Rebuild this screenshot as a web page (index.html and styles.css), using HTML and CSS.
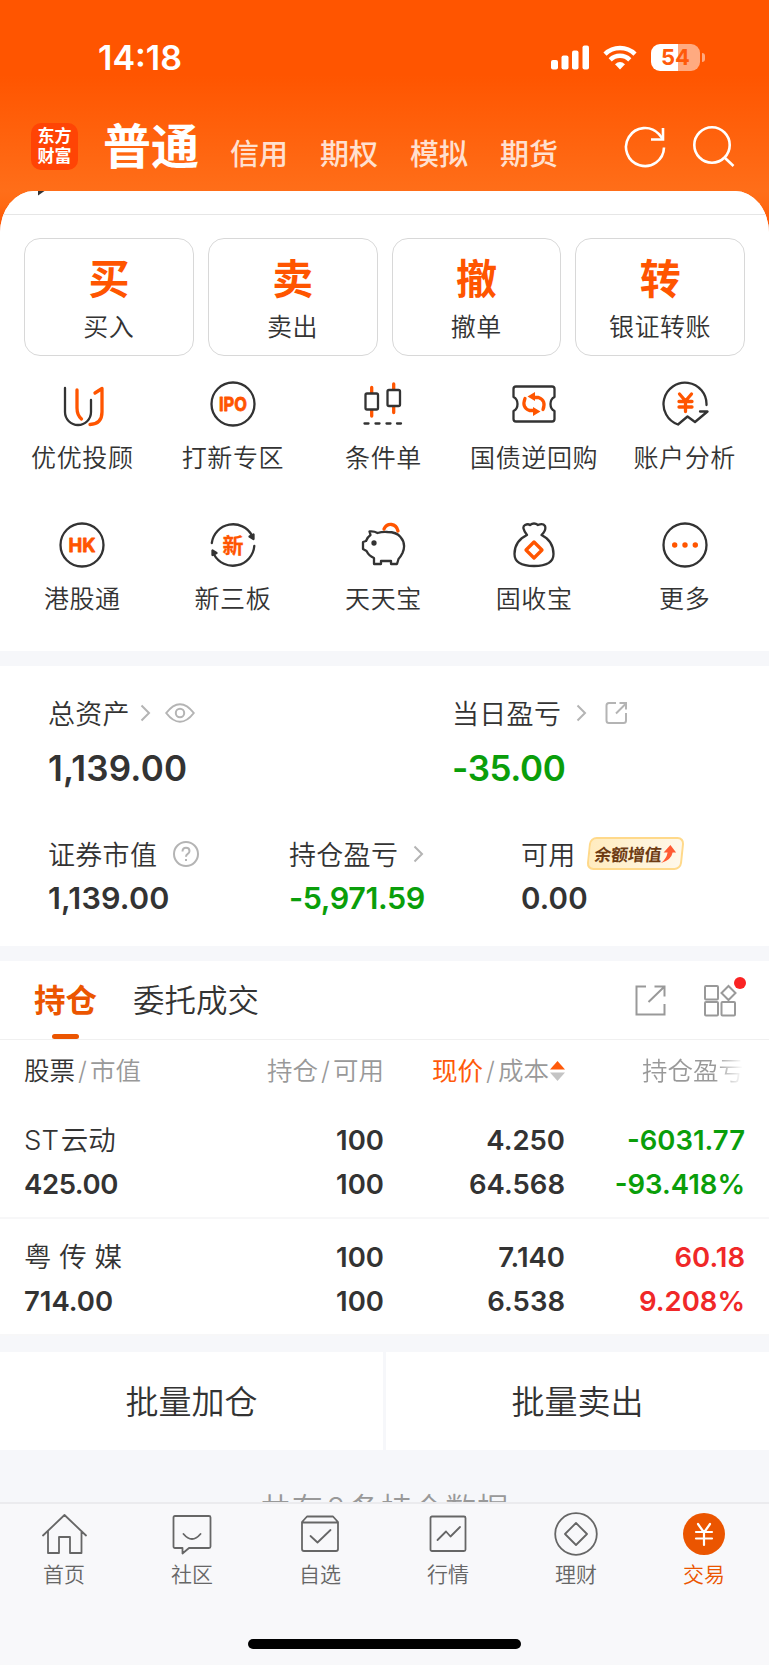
FILE: index.html
```html
<!DOCTYPE html>
<html lang="zh-CN">
<head>
  <meta charset="UTF-8">
  <meta name="viewport" content="width=device-width, initial-scale=1.0">
  <title>交易</title>
  <link rel="stylesheet" href="styles.css">
</head>
<body>
  <header class="header">
    <div class="status-bar">
      <span class="time">14:18</span>
      <div class="status-icons">
        <svg class="signal" width="39" height="25" viewBox="0 0 39 25" fill="#fff">
          <rect x="0" y="15" width="7" height="9.500" rx="2"/>
          <rect x="10.500" y="10.500" width="7" height="14" rx="2"/>
          <rect x="21" y="5.500" width="6.500" height="19" rx="2"/>
          <rect x="31.500" y="0.500" width="6.500" height="24" rx="2"/>
        </svg>
        <svg class="wifi" width="34" height="25" viewBox="0 0 34 25" fill="none" stroke="#fff" stroke-width="4.500">
          <path d="M2 9.200a21.500 21.500 0 0 1 30 0"/>
          <path d="M7.200 14.800a14 14 0 0 1 19.600 0"/>
          <path d="M17 24.500l-5-5.200q5-4.400 10 0z" fill="#fff" stroke="none"/>
        </svg>
        <div class="battery"><span>54</span></div>
      </div>
    </div>
    <nav class="top-nav">
      <div class="logo"><span>东方</span><span>财富</span></div>
      <h1>普通</h1>
      <a>信用</a>
      <a>期权</a>
      <a>模拟</a>
      <a>期货</a>
      <svg class="refresh" width="42" height="42" viewBox="0 0 42 42" fill="none" stroke="#fff" stroke-width="2.600">
        <path d="M40 21.500a19 19 0 1 1-5-13.300l4 5"/>
        <path d="M39 2v11.500H27"/>
      </svg>
      <svg class="search" width="42" height="42" viewBox="0 0 42 42" fill="none" stroke="#fff" stroke-width="2.600">
        <circle cx="19" cy="19" r="17.700"/>
        <path d="M31 31l9.500 9"/>
      </svg>
    </nav>
  </header>

  <main class="panel">
    <div class="notice">
      <svg width="7" height="5" viewBox="0 0 7 5"><path d="M0 0h6.500L0 4.500z" fill="#333"/></svg>
    </div>

    <section class="actions">
      <div class="action"><strong>买</strong><span>买入</span></div>
      <div class="action"><strong>卖</strong><span>卖出</span></div>
      <div class="action"><strong>撤</strong><span>撤单</span></div>
      <div class="action"><strong>转</strong><span>银证转账</span></div>
    </section>

    <section class="tools">
      <div class="tool">
        <svg viewBox="0 0 48 48">
          <path d="M7 8v24a12.500 12.500 0 0 0 26 0V20"/>
          <path class="hot" d="M19 10v18q0 7 4.500 11M37 13l7-4.500V32q0 12-12 12.500"/>
        </svg>
        <span>优优投顾</span>
      </div>
      <div class="tool">
        <svg viewBox="0 0 48 48">
          <circle cx="24" cy="24" r="21.500"/>
          <text x="24" y="31" textLength="28" lengthAdjust="spacingAndGlyphs" class="ico-text">IPO</text>
        </svg>
        <span>打新专区</span>
      </div>
      <div class="tool">
        <svg viewBox="0 0 48 48">
          <path class="hot" d="M12.700 7.500v28.500M34.700 4v28.500"/>
          <rect x="6.500" y="13.500" width="12.500" height="16" rx="1.500" fill="#fff"/>
          <rect x="28.500" y="10" width="12.500" height="16" rx="1.500" fill="#fff"/>
          <path d="M5.500 43.500h4M16.500 43.500h4M27.500 43.500h4M38 43.500h4"/>
        </svg>
        <span>条件单</span>
      </div>
      <div class="tool">
        <svg viewBox="0 0 48 48">
          <path d="M6 6.500h36q2.500 0 2.500 2.500v8q-4 2-4 7t4 7v8q0 2.500-2.500 2.500H6q-2.500 0-2.500-2.500v-8q4-2 4-7t-4-7V9q0-2.500 2.500-2.500z"/>
          <path class="hot" d="M15 18.500q-3.500 9 4.500 12h5M33 29.500q3.500-9-4.500-12h-5"/>
          <path class="hot-fill" d="M17.500 16.500l7.500-4.500v9zM30.500 31.500L23 27v9z"/>
        </svg>
        <span>国债逆回购</span>
      </div>
      <div class="tool">
        <svg viewBox="0 0 48 48">
          <path d="M45.500 25A21.500 21.500 0 1 0 17 44.500l9.500-8 7.500 5.500 12.500-10.500H39"/>
          <path class="hot" d="M18.500 14l6 7 6-7M24.500 21v10.500M18 21.500h13M18 27h13"/>
        </svg>
        <span>账户分析</span>
      </div>
      <div class="tool">
        <svg viewBox="0 0 48 48">
          <circle cx="24" cy="24" r="21.500"/>
          <text x="24" y="31" textLength="27" lengthAdjust="spacingAndGlyphs" class="ico-text">HK</text>
        </svg>
        <span>港股通</span>
      </div>
      <div class="tool">
        <svg viewBox="0 0 48 48">
          <path d="M2.800 22A21.500 21.500 0 0 1 43 14.500M45.300 25A21.500 21.500 0 0 1 5 33.500"/>
          <path class="dark-fill" d="M44.500 13.500v4.500l-4-2.500zM3.500 29.500v4.500l4-2z"/>
          <text x="24" y="31.500" class="ico-text ico-cjk">新</text>
        </svg>
        <span>新三板</span>
      </div>
      <div class="tool">
        <svg viewBox="0 0 48 48">
          <path d="M10.500 10.500q4.500-.5 8 1.500 5-1.500 10-1 9 0 13 5 6 7 2 16-2 4-4 6l-1.500 5h-6v-3h-10v3h-7v-6q-5-2-7.500-7L4 28v-7l3-1q1.500-4 4.500-6z"/>
          <circle cx="15" cy="22" r="1.500" class="dark-fill"/>
          <path class="hot" d="M25 8q2.500-5 7.500-4.500T39 10"/>
        </svg>
        <span>天天宝</span>
      </div>
      <div class="tool">
        <svg viewBox="0 0 48 48">
          <path d="M17 14q-6-8-2-10 3-1.500 5 0 4-3 8 0 5-2 7 1 1.500 4-3.500 9 12 6 12 19 0 12-19.500 12T4.500 33Q4.500 20 17 14z"/>
          <path class="hot" d="M24 21l8 8-8 8-8-8z"/>
        </svg>
        <span>固收宝</span>
      </div>
      <div class="tool">
        <svg viewBox="0 0 48 48">
          <circle cx="24" cy="24" r="21.500"/>
          <path class="hot-fill" d="M11 24a2.700 2.700 0 1 0 5.400 0 2.700 2.700 0 1 0-5.400 0M21.300 24a2.700 2.700 0 1 0 5.400 0 2.700 2.700 0 1 0-5.400 0M31.600 24a2.700 2.700 0 1 0 5.400 0 2.700 2.700 0 1 0-5.400 0"/>
        </svg>
        <span>更多</span>
      </div>
    </section>

    <section class="assets">
      <div class="assets-row total">
        <div class="asset">
          <div class="label">总资产
            <svg class="arrow" width="11" height="18" viewBox="0 0 11 18"><path d="M1.500 1.500L9 9l-7.500 7.500"/></svg>
            <svg class="eye" width="30" height="20" viewBox="0 0 30 20"><path d="M1.200 10Q8 1.200 15 1.200T28.800 10Q22 18.800 15 18.800T1.200 10z"/><circle cx="15" cy="10" r="4.200"/></svg>
          </div>
          <div class="value">1,139.00</div>
        </div>
        <div class="asset">
          <div class="label">当日盈亏
            <svg class="arrow" width="11" height="18" viewBox="0 0 11 18"><path d="M1.500 1.500L9 9l-7.500 7.500"/></svg>
            <svg class="share" width="23" height="24" viewBox="0 0 23 24"><path d="M11 2H4Q1.500 2 1.500 4.500v15Q1.500 22 4 22h14.500q2.500 0 2.500-2.500V12M11 12.500L21 2.500M14.500 2h6.500v6.500"/></svg>
          </div>
          <div class="value down">-35.00</div>
        </div>
      </div>
      <div class="assets-row detail">
        <div class="asset">
          <div class="label">证券市值
            <svg class="help" width="26" height="26" viewBox="0 0 26 26"><circle cx="13" cy="13" r="12"/><path d="M9.500 10.500q0-3.800 3.500-3.800t3.500 3.300q0 1.800-1.800 2.900T13 15.800"/><path d="M13 18v2"/></svg>
          </div>
          <div class="value">1,139.00</div>
        </div>
        <div class="asset">
          <div class="label">持仓盈亏
            <svg class="arrow" width="11" height="18" viewBox="0 0 11 18"><path d="M1.500 1.500L9 9l-7.500 7.500"/></svg>
          </div>
          <div class="value down">-5,971.59</div>
        </div>
        <div class="asset">
          <div class="label">可用
            <div class="badge"><span>余额增值</span>
              <svg width="15" height="18" viewBox="0 0 15 18"><path d="M8.500 0L15 7.500h-3.500Q11 15 1 18q5-4 5.500-10.500H2.500z" fill="#ff5a32"/></svg>
            </div>
          </div>
          <div class="value zero">0.00</div>
        </div>
      </div>
    </section>

    <section class="holdings">
      <div class="tabs">
        <div class="tab active">持仓</div>
        <div class="tab">委托成交</div>
        <svg class="open" width="31" height="31" viewBox="0 0 31 31"><path d="M11 1.500H1.500v28h28V19M13.500 17L29 2M19.500 1.500h10v10"/></svg>
        <div class="grid-icon">
          <svg width="33" height="33" viewBox="0 0 33 33"><rect x="1" y="2" width="13" height="13.500" rx="1"/><rect x="1" y="18" width="13" height="13.500" rx="1"/><rect x="17.500" y="18" width="13.500" height="13.500" rx="1"/><path d="M24.500 2l7 7-7 7-7-7z"/></svg>
          <i class="dot"></i>
        </div>
      </div>
      <div class="row head">
        <div><em>股票</em><i>/</i>市值</div>
        <div>持仓<i>/</i>可用</div>
        <div class="sort"><b>现价</b><i>/</i>成本<svg width="15" height="20" viewBox="0 0 15 20"><path d="M7.500 0L15 8.500H0z" fill="#ff5a0a"/><path d="M7.500 20L15 11.500H0z" fill="#c4c4c4"/></svg></div>
        <div class="fade">持仓盈亏</div>
      </div>
      <div class="row">
        <div><span class="name">ST<i></i>云动</span><span class="amount">425.00</span></div>
        <div><span>100</span><span>100</span></div>
        <div><span>4.250</span><span>64.568</span></div>
        <div class="down"><span>-6031.77</span><span>-93.418%</span></div>
      </div>
      <div class="row">
        <div><span class="name">粤 传 媒</span><span>714.00</span></div>
        <div><span>100</span><span>100</span></div>
        <div><span>7.140</span><span>6.538</span></div>
        <div class="up"><span>60.18</span><span>9.208%</span></div>
      </div>
    </section>

    <section class="batch">
      <div>批量加仓</div>
      <div>批量卖出</div>
    </section>
    <p class="count">共有 2 条持仓数据</p>
  </main>

  <footer class="tabbar">
    <div class="tabbar-items">
      <div class="item">
        <svg viewBox="0 0 46 46"><path d="M2 23.500L23.500 3 45 23.500M7 19v22h11V25h11v16h11.500V19"/></svg>
        <span>首页</span>
      </div>
      <div class="item">
        <svg viewBox="0 0 46 46"><path d="M6 4h34q1.500 0 1.500 1.500v29q0 1.500-1.500 1.500H20l-6.500 5.500V36H6q-1.500 0-1.500-1.500v-29Q4.500 4 6 4zM14.500 22q8.500 10 17 0"/></svg>
        <span>社区</span>
      </div>
      <div class="item">
        <svg viewBox="0 0 46 46"><path d="M5 10l5-5.500h26l5 5.500v27q0 2-2 2H7q-2 0-2-2zM5 10.500h36M13.500 24l7 6.500L33.500 18"/></svg>
        <span>自选</span>
      </div>
      <div class="item">
        <svg viewBox="0 0 46 46"><rect x="5.500" y="4.500" width="35" height="34.500" rx="1.500"/><path d="M12.500 28l8.500-8.500 4.500 5L35 15"/></svg>
        <span>行情</span>
      </div>
      <div class="item">
        <svg viewBox="0 0 46 46"><circle cx="23" cy="22" r="20.800"/><path d="M23 11l11 11-11 11-11-11z"/></svg>
        <span>理财</span>
      </div>
      <div class="item current">
        <svg viewBox="0 0 46 46"><circle cx="23" cy="22" r="21" class="solid"/><path class="yen" d="M17 12l6 8.500 6-8.500M23 20.500V33M15 20h16M15 26.500h16"/></svg>
        <span>交易</span>
      </div>
    </div>
    <div class="home-indicator"></div>
  </footer>
</body>
</html>
```

FILE: styles.css
```css
* {
  box-sizing: border-box;
}
body {
  margin: 0;
  width: 769px;
  height: 1665px;
  overflow: hidden;
  display: flex;
  flex-direction: column;
  background: #f7f8fa;
  color: #333;
  font-family: Inter, "Noto Sans CJK SC", sans-serif;
  font-weight: 350;
}
svg {
  display: block;
  flex: none;
}
i {
  font-style: normal;
}
.header {
  height: 240px;
  flex: none;
  background: linear-gradient(#ff5500 75px, #ff6e19 191px, #ff6a14 205px, #ff5500 225px);
}
.status-bar {
  display: flex;
  justify-content: space-between;
  align-items: center;
  height: 115px;
  padding: 0 69px 0 98px;
}
.time {
  color: #fff;
  font-size: 34px;
  font-weight: 600;
}
.status-icons {
  display: flex;
  align-items: center;
}
.wifi {
  margin: 0 14px 0 13px;
}
.battery {
  position: relative;
  width: 49px;
  height: 27px;
  border-radius: 9px;
  background: linear-gradient(90deg, #fff 27px, #ffaa80 27px);
  color: #ff5a0a;
  font-size: 22px;
  font-weight: 700;
  line-height: 27px;
  text-align: center;
}
.battery::after {
  content: "";
  position: absolute;
  right: -5px;
  top: 9px;
  width: 3px;
  height: 9px;
  border-radius: 0 4px 4px 0;
  background: #ffaa80;
}
.top-nav {
  display: flex;
  height: 64px;
  padding-left: 31px;
  color: #ffe0d0;
}
.logo {
  display: flex;
  flex-direction: column;
  width: 47px;
  height: 47px;
  margin-top: 8px;
  padding: 4px 0;
  border-radius: 10px;
  background: #ff4405;
  color: #fff;
  font-size: 17px;
  font-weight: 700;
  line-height: 19.500px;
  text-align: center;
}
.top-nav h1 {
  margin: 0 0 0 25px;
  width: 96px;
  color: #fff;
  font-size: 48px;
  font-weight: 700;
  line-height: 63px;
}
.top-nav a {
  margin-left: 31px;
  width: 59px;
  font-size: 29px;
  font-weight: 500;
  line-height: 80px;
}
.refresh {
  margin: 11px 0 0 65px;
}
.search {
  margin: 11px 0 0 27px;
}
.panel {
  height: 1311px;
  margin-top: -49px;
  flex: none;
  overflow: hidden;
  border-radius: 34px 34px 0 0 / 42px 42px 0 0;
  background: #f6f7fa;
}
.notice {
  height: 24px;
  padding-left: 38px;
  background: #fff;
  border-bottom: 1px solid #e6e6e6;
}
.actions {
  display: grid;
  grid-template-columns: repeat(4, 1fr);
  gap: 14px;
  padding: 23px 24px 0;
  background: #fff;
}
.action {
  display: flex;
  flex-direction: column;
  align-items: center;
  height: 118px;
  border: 1px solid #d8d8d8;
  border-radius: 16px;
}
.action strong {
  margin-top: 10px;
  color: #ff5500;
  font-size: 41px;
  font-weight: 700;
  line-height: 60px;
}
.action span {
  font-size: 25px;
  letter-spacing: 0.500px;
  line-height: 37px;
}
.tools {
  display: grid;
  grid-template-columns: repeat(5, 1fr);
  height: 295px;
  padding: 24px 9px 0 7px;
  background: #fff;
}
.tool {
  height: 141px;
  display: flex;
  flex-direction: column;
  align-items: center;
  font-size: 25px;
  letter-spacing: 0.600px;
  line-height: 37px;
  white-space: nowrap;
}
.tool svg {
  width: 48px;
  height: 48px;
  margin-bottom: 12px;
  fill: none;
  stroke: #333;
  stroke-width: 2.300;
  stroke-linejoin: round;
  stroke-linecap: round;
}
.tool .hot {
  stroke: #ff5500;
  stroke-width: 3.300;
}
.tool .hot-fill {
  fill: #ff5500;
  stroke: none;
}
.tool .dark-fill {
  fill: #333;
}
.tool .ico-text {
  fill: #ff5500;
  stroke: #ff5500;
  stroke-width: 0.800;
  font-size: 19px;
  font-weight: 700;
  letter-spacing: 0;
  text-anchor: middle;
}
.tool .ico-cjk {
  stroke-width: 0.300;
  font-size: 21px;
}
.assets {
  height: 280px;
  margin-top: 15px;
  padding-left: 48px;
  background: #fff;
}
.assets-row {
  display: grid;
}
.total {
  grid-template-columns: 404px 1fr;
  height: 141px;
  padding-top: 28px;
}
.detail {
  grid-template-columns: 241px 232px 1fr;
  padding-top: 28px;
}
.label {
  display: flex;
  align-items: center;
  height: 38px;
  padding-bottom: 1px;
  font-size: 27px;
  letter-spacing: 0.300px;
}
.label svg {
  fill: none;
  stroke: #b4b4b4;
  stroke-width: 2;
}
.label .arrow {
  margin-left: 10px;
}
.total .share {
  margin-left: 18px;
}
.eye {
  margin-left: 14px;
}
.help {
  margin-left: 16px;
}
.detail .arrow,
.total .asset + .asset .arrow {
  margin-left: 15px;
}
.value {
  font-size: 35px;
  font-weight: 600;
  letter-spacing: 0.200px;
  line-height: 72px;
}
.detail .value {
  font-size: 30.500px;
  line-height: 50px;
}
.value.down {
  letter-spacing: -0.400px;
}
.detail .value.zero {
  font-size: 29.500px;
}
.down {
  color: #0a9e0a;
}
.up {
  color: #f02828;
}
.badge {
  display: flex;
  align-items: center;
  justify-content: center;
  width: 95px;
  height: 33px;
  margin-left: 12px;
  border: 2px solid #ffd98a;
  border-radius: 7px;
  background: linear-gradient(90deg, #ffecc0, #fff8ea);
  color: #6e3c14;
  font-size: 17px;
  font-weight: 700;
  letter-spacing: -0.300px;
  transform: skewX(-6deg);
}
.label .badge svg {
  stroke: none;
}
.holdings {
  height: 375px;
  margin-top: 15px;
  background: #fff;
}
.tabs {
  display: flex;
  align-items: center;
  height: 79px;
  padding-left: 34px;
  border-bottom: 1px solid #f0f0f0;
  font-size: 31.500px;
}
.tab {
  position: relative;
  height: 78px;
  margin-right: 36px;
  line-height: 80px;
}
.tab.active {
  color: #eb5500;
  font-weight: 700;
}
.tab.active::after {
  content: "";
  position: absolute;
  left: 18px;
  bottom: 0;
  width: 27px;
  height: 5px;
  border-radius: 3px;
  background: #eb5500;
}
.tabs svg {
  fill: none;
  stroke: #999;
  stroke-width: 2;
}
.open {
  margin-left: auto;
}
.grid-icon {
  position: relative;
  margin: 0 32px 0 38px;
}
.dot {
  position: absolute;
  right: -9px;
  top: -7px;
  width: 12px;
  height: 12px;
  border-radius: 50%;
  background: #fa2323;
}
.row {
  display: grid;
  grid-template-columns: 200px 160px 181px 180px;
  height: 117px;
  padding: 16px 24px 0;
  font-size: 27.500px;
  font-weight: 600;
  line-height: 44px;
  text-align: right;
}
.row + .row {
  border-bottom: 2px solid #f7f7f8;
}
.row div:first-child {
  text-align: left;
}
.row span {
  display: block;
}
.row .name {
  font-weight: 350;
}
.name i {
  margin-left: 2px;
}
.amount {
  letter-spacing: -0.400px;
}
.row.head {
  height: 62px;
  padding-top: 9px;
  color: #999;
  font-size: 25.500px;
  font-weight: 350;
  border-bottom: 0;
}
.head i {
  margin: 0 3px;
}
.head em {
  color: #333;
  font-style: normal;
}
.head b {
  color: #ff5a0a;
  font-weight: 400;
}
.sort {
  display: flex;
  align-items: center;
  justify-content: flex-end;
  height: 44px;
}
.sort svg {
  margin-left: 1px;
}
.head .fade {
  padding-right: 1px;
  background: linear-gradient(90deg, #999 150px, #fff 178px);
  background-clip: text;
  color: transparent;
}
.batch {
  display: grid;
  grid-template-columns: 1fr 1fr;
  gap: 3px;
  margin-top: 16px;
  font-size: 33px;
  line-height: 99px;
  text-align: center;
}
.batch div {
  height: 98px;
  padding-top: 1px;
  background: #fff;
}
.count {
  margin: 37px 0 0;
  color: #999;
  font-size: 31px;
  letter-spacing: 1px;
  word-spacing: -7px;
  line-height: 44px;
  text-align: center;
}
.tabbar {
  flex: 1;
  background: #f8f8fa;
  border-top: 2px solid #ebebee;
}
.tabbar-items {
  display: grid;
  grid-template-columns: repeat(6, 1fr);
  height: 135px;
  padding: 8px 1px 0 0;
}
.item {
  display: flex;
  flex-direction: column;
  align-items: center;
  color: #666;
  font-size: 21px;
  line-height: 30px;
}
.item svg {
  width: 46px;
  height: 46px;
  margin-bottom: 2px;
  fill: none;
  stroke: #666;
  stroke-width: 1.800;
  stroke-linejoin: round;
  stroke-linecap: round;
}
.item.current {
  color: #eb5500;
}
.item .solid {
  fill: #eb5500;
  stroke: none;
}
.item .yen {
  stroke: #fff;
  stroke-width: 2.200;
}
.home-indicator {
  width: 273px;
  height: 10px;
  margin: 0 auto;
  border-radius: 5px;
  background: #000;
}
```
